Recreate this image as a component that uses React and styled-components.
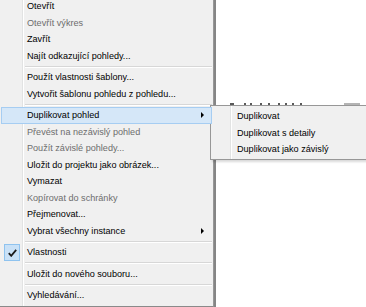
import React from "react";
import styled, { createGlobalStyle } from "styled-components";

const items = [
  { label: "Otevřít" },
  { label: "Otevřít výkres", disabled: true },
  { label: "Zavřít" },
  { label: "Najít odkazující pohledy..." },
  { sep: true },
  { label: "Použít vlastnosti šablony..." },
  { label: "Vytvořit šablonu pohledu z pohledu..." },
  { sep: true },
  { label: "Duplikovat pohled", sub: true, active: true },
  { label: "Převést na nezávislý pohled", disabled: true },
  { label: "Použít závislé pohledy...", disabled: true },
  { label: "Uložit do projektu jako obrázek..." },
  { label: "Vymazat" },
  { label: "Kopírovat do schránky", disabled: true },
  { label: "Přejmenovat..." },
  { label: "Vybrat všechny instance", sub: true },
  { sep: true },
  { label: "Vlastnosti", checked: true },
  { sep: true },
  { label: "Uložit do nového souboru..." },
  { sep: true },
  { label: "Vyhledávání..." },
];

const subItems = ["Duplikovat", "Duplikovat s detaily", "Duplikovat jako závislý"];

// glyph tops of a table row hidden behind the submenu
const marks = [0, 2, 14, 20, 30, 38, 48, 55, 62, 70];

export default function App() {
  return (
    <>
      <GlobalStyle />
      <Canvas>
        <LeftPane />
        <Splitter />
        <RightPane>
          <TableRow>
            <Marks>
              {marks.map((m, i) => (
                <Mark key={i} $gap={i === 0 ? 0 : m - marks[i - 1] - 2} />
              ))}
            </Marks>
            <Chip />
          </TableRow>
        </RightPane>

        <Menu>
          {items.map((it, i) =>
            it.sep ? (
              <Separator key={i} />
            ) : (
              <Item key={i} $active={it.active} $disabled={it.disabled}>
                {it.checked && (
                  <CheckBox>
                    <svg width="9" height="8" viewBox="0 0 9 8">
                      <path d="M0.8 4.2 L3.2 6.8 L8.2 0.9" fill="none" stroke="#1b1b1b" strokeWidth="1.8" />
                    </svg>
                  </CheckBox>
                )}
                {it.label}
                {it.sub && <Arrow />}
              </Item>
            )
          )}
        </Menu>

        <SubMenu>
          {subItems.map((s) => (
            <SubItem key={s}>{s}</SubItem>
          ))}
        </SubMenu>
      </Canvas>
    </>
  );
}

const GlobalStyle = createGlobalStyle`
  html, body {
    margin: 0;
    padding: 0;
    overflow: hidden;
    background: #fff;
  }
  body {
    font-family: "Liberation Sans", "Noto Sans", sans-serif;
  }
`;

const Canvas = styled.div`
  position: relative;
  width: 366px;
  height: 307px;
  display: flex;
  overflow: hidden;
  background: #fff;
`;

const LeftPane = styled.div`
  width: 214px;
  background: #f0f0f0;
`;

const Splitter = styled.div`
  width: 2px;
  background: #858585;
`;

const RightPane = styled.div`
  flex: 1;
  padding-top: 103px;
`;

const TableRow = styled.div`
  display: flex;
  align-items: flex-start;
  justify-content: space-between;
  padding: 0 6px 0 14px;
  height: 3px;
`;

const Marks = styled.div`
  display: flex;
`;

const Mark = styled.div`
  width: 2px;
  height: 2px;
  margin-left: ${(p) => p.$gap}px;
  background: #5a5a5a;
`;

const Chip = styled.div`
  width: 16px;
  height: 2px;
  background: #b4b4b4;
`;

const Menu = styled.div`
  position: absolute;
  left: 0;
  top: -2px;
  width: 214px;
  box-sizing: border-box;
  padding: 0 1px 2px 0;
  background: #f0f0f0;
  border-right: 1px solid #979797;
  border-bottom: 1px solid #8a8a8a;
  font-size: 9.1px;

  &::before {
    content: "";
    position: absolute;
    left: 22px;
    top: 0;
    bottom: 0;
    width: 1px;
    background: #e2e3e3;
    border-right: 1px solid #fff;
  }
`;

const Item = styled.div`
  position: relative;
  z-index: 1;
  height: 16.5px;
  box-sizing: border-box;
  margin-left: 1px;
  display: flex;
  align-items: center;
  padding-left: 25px;
  color: ${(p) => (p.$disabled ? "#6d6d6d" : "#000")};
  background: ${(p) => (p.$active ? "#d5e7f8" : "transparent")};
  border: 1px solid ${(p) => (p.$active ? "#a6cdf2" : "transparent")};
  white-space: nowrap;
`;

const Arrow = styled.span`
  position: absolute;
  right: 7px;
  top: 50%;
  margin-top: -3px;
  width: 0;
  height: 0;
  border-top: 3px solid transparent;
  border-bottom: 3px solid transparent;
  border-left: 3px solid #000;
`;

const CheckBox = styled.span`
  position: absolute;
  left: 2px;
  top: -1px;
  width: 16px;
  height: 17px;
  box-sizing: border-box;
  background: #c9e1f7;
  border: 1px solid #8fc3ef;
  display: flex;
  align-items: center;
  justify-content: center;
`;

const Separator = styled.div`
  height: 5px;
  display: flex;
  align-items: center;
  padding-left: 25px;

  &::after {
    content: "";
    flex: 1;
    height: 1px;
    background: #d7d7d7;
    border-bottom: 1px solid #fff;
  }
`;

const SubMenu = styled.div`
  position: absolute;
  left: 210px;
  top: 105px;
  width: 170px;
  box-sizing: border-box;
  padding: 2px 0 1px;
  background: #f0f0f0;
  border: 1px solid #979797;
  font-size: 9.1px;
  box-shadow: 2px 2px 2px rgba(0, 0, 0, 0.15);

  &::before {
    content: "";
    position: absolute;
    left: 19px;
    top: 0;
    bottom: 0;
    width: 1px;
    background: #e2e3e3;
    border-right: 1px solid #fff;
  }
`;

const SubItem = styled.div`
  height: 16.5px;
  display: flex;
  align-items: center;
  padding-left: 26px;
  color: #000;
  white-space: nowrap;
`;
